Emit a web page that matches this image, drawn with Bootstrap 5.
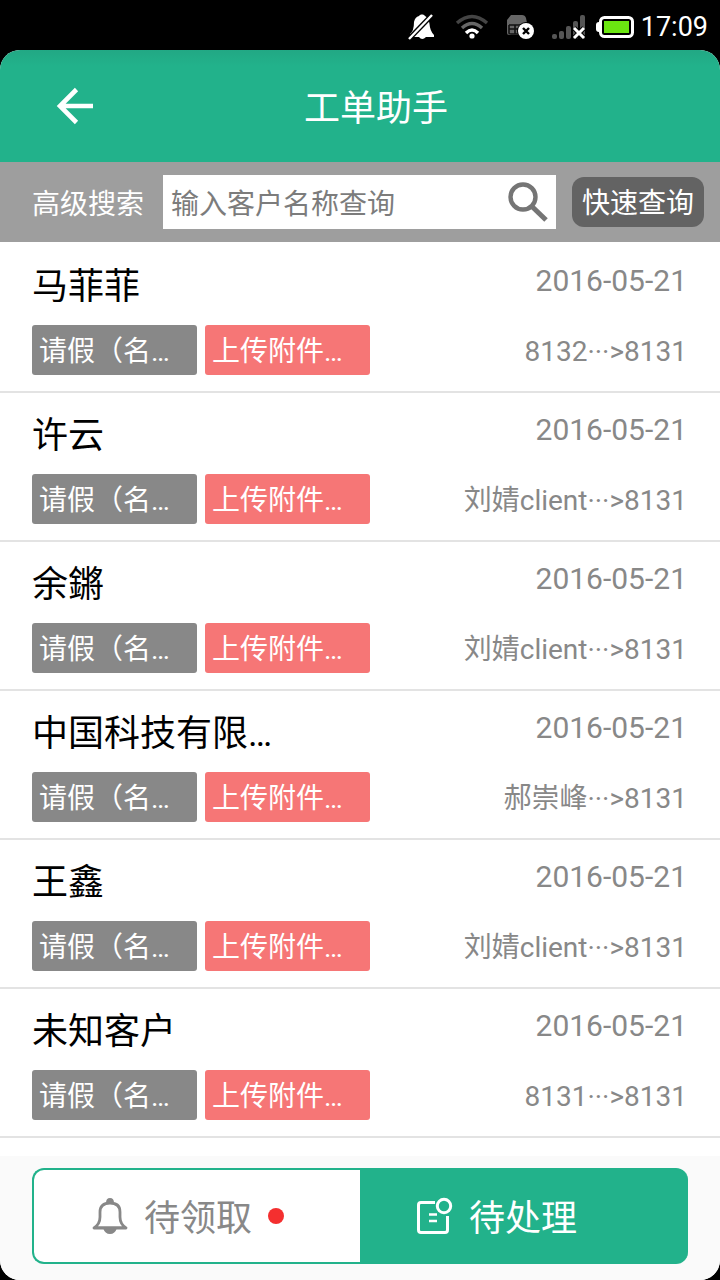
<!DOCTYPE html>
<html lang="zh-CN">
<head>
<meta charset="utf-8">
<meta name="viewport" content="width=device-width, initial-scale=1">
<title>工单助手</title>
<link href="https://cdn.jsdelivr.net/npm/bootstrap@5.3.0/dist/css/bootstrap.min.css" rel="stylesheet">
<style>
  :root { --brand: #22b28b; --muted: #888; }
  body { background: #000; color: #000; font-family: Roboto, "Noto Sans CJK SC", sans-serif; font-size: 28px; line-height: 40px; }
  svg { display: block; flex: none; }
  .status-bar { height: 50px; padding: 4px 12px 0 0; font-size: 27px; gap: 6px; }
  .status-icons { gap: 16px; }
  .app { background: #fff; border-radius: 20px; }
  .app-header { height: 112px; background: linear-gradient(#22a884, var(--brand) 16px); }
  .app-header h1 { font-size: 36px; line-height: 52px; font-weight: 400; padding-top: 6px; }
  .side { width: 150px; }
  .side-end { width: 118px; }
  .back { padding: 16px 56px; }
  .search-bar { background: #9e9e9e; height: 80px; padding: 0 16px 0 32px; gap: 16px; }
  .advanced { margin-right: 3px; padding-top: 6px; }
  .search-box { height: 54px; }
  .search-box input { min-width: 0; font-size: 28px; line-height: 40px; padding: 6px 0 0 8px; color: #777; }
  .search-box input::placeholder { color: #7c7c7c; opacity: 1; }
  .quick { background: #636363; border-radius: 12px; height: 50px; flex: 0 0 132px; padding: 4px 0 0; }
  .orders { padding-top: 2px; }
  .order { padding: 17px 33px 16px 32px; border-bottom: 2px solid #e3e3e3; }
  .order h2 { font-size: 36px; line-height: 52px; font-weight: 400; margin-bottom: 12px; }
  .tags { gap: 8px; }
  .tag { width: 165px; height: 50px; line-height: 54px; padding-left: 7px; border-radius: 3px; color: #fff; background: #888; }
  .tag-red { background: #f67676; }
  .meta { color: var(--muted); }
  .meta time { font-size: 30px; }
  .route { padding-bottom: 3px; }
  .tab-bar { background: #fafafa; padding: 12px 32px 16px; }
  .tab-item { height: 96px; font-size: 36px; line-height: 52px; color: var(--muted); gap: 16px; padding: 0 0 0 58px; background: #fff; border: 2px solid var(--brand); border-right: 0; border-radius: 12px 0 0 12px; }
  .tab-item.active { background: var(--brand); color: #fff; padding-left: 53px; border-color: var(--brand); border-radius: 0 12px 12px 0; }
  .tab-label { padding-top: 6px; }
  .dot { width: 16px; height: 16px; background: #f42f2f; }
</style>
</head>
<body>
<div class="d-flex flex-column min-vh-100">
  <div class="status-bar d-flex align-items-center justify-content-end text-white">
    <div class="status-icons d-flex">
      <svg width="31" height="26" viewBox="0 0 31 26"><path d="M2 20Q6 17 6 8Q7 3 11 2Q12 0 14 0.500Q16 0 17 2Q21 4 21.500 10Q22 17 26 21V23H18Q14 27 11 23H2Z" fill="#fff"/><path d="M-1 27L26-1" stroke="#000" stroke-width="5"/><path d="M1 25L24 1" stroke="#fff" stroke-width="2.400"/></svg>
      <svg width="35" height="26" viewBox="0 0 35 26" fill="none" stroke-width="3.4"><path d="M2 9Q17-4 32 9" stroke="#444"/><path d="M7 14Q17 5 27 14" stroke="#666"/><path d="M11 19Q17 13 23 19" stroke="#fff"/><circle cx="17" cy="22" r="2.6" fill="#fff"/></svg>
      <svg width="30" height="26" viewBox="0 0 30 26"><path d="M5 1H16Q19 1 20 4L21 9V21H3Q1 21 1 19V6Z" fill="#666"/><path d="M3 11H22M3 11V19Q3 20 5 20H14M3 15H12M9 11V20" fill="none" stroke="#111" stroke-width="1.6"/><circle cx="20" cy="17" r="9" fill="#000"/><circle cx="20" cy="17" r="8" fill="#fff"/><path d="M17 14L23 20M23 14L17 20" stroke="#000" stroke-width="2.4"/></svg>
      <svg width="34" height="26" viewBox="0 0 34 26"><g fill="#555"><rect y="20" width="5" height="5" rx="2"/><rect x="7" y="17" width="5" height="8" rx="2"/><rect x="14" y="12" width="5" height="13" rx="2"/><rect x="21" y="7" width="5" height="18" rx="2"/><rect x="28" y="1" width="5" height="24" rx="2"/></g><path d="M22 14L32 24M32 14L22 24" stroke="#000" stroke-width="5"/><path d="M22 14L32 24M32 14L22 24" stroke="#fff" stroke-width="3"/></svg>
    </div>
    <svg class="ms-1" width="39" height="22" viewBox="0 0 39 22"><rect y="6" width="6" height="10" rx="3" fill="#fff"/><rect x="4.500" y="1.500" width="32" height="19" rx="4" fill="#000" stroke="#fff" stroke-width="3"/><rect x="8" y="5" width="25" height="12" fill="#6be611"/></svg>
    <span>17:09</span>
  </div>

  <div class="app d-flex flex-column flex-grow-1 overflow-hidden">
    <header class="app-header d-flex align-items-center text-white">
      <div class="side"><button type="button" class="back btn border-0" aria-label="返回"><svg width="38" height="38" viewBox="0 0 38 38" fill="none" stroke="#fff" stroke-width="4.600"><path d="M20.500 2.500L4 19L20.500 35.500M4 19H37"/></svg></button></div>
      <h1 class="flex-grow-1 text-center mb-0">工单助手</h1>
      <div class="side-end"></div>
    </header>

    <form class="search-bar d-flex align-items-center">
      <a href="#" class="advanced text-white text-decoration-none text-nowrap">高级搜索</a>
      <div class="search-box d-flex align-items-center flex-grow-1 bg-white">
        <input type="text" class="form-control border-0 rounded-0 bg-transparent shadow-none" placeholder="输入客户名称查询" aria-label="输入客户名称查询">
        <button type="button" class="btn border-0 p-0 me-2" aria-label="搜索"><svg width="40" height="40" viewBox="0 0 40 40" fill="none" stroke="#757575"><circle cx="15" cy="15" r="12.500" stroke-width="4.400"/><path d="M24.500 25L38 38" stroke-width="5"/></svg></button>
      </div>
      <button type="button" class="quick border-0 text-white text-nowrap">快速查询</button>
    </form>

    <ul class="orders list-unstyled m-0">
      <li class="order d-flex justify-content-between">
        <div><h2>马菲菲</h2><div class="tags d-flex"><span class="tag">请假（名…</span><span class="tag tag-red">上传附件…</span></div></div>
        <div class="meta d-flex flex-column justify-content-between text-end"><time datetime="2016-05-21">2016-05-21</time><span class="route">8132···&gt;8131</span></div>
      </li>
      <li class="order d-flex justify-content-between">
        <div><h2>许云</h2><div class="tags d-flex"><span class="tag">请假（名…</span><span class="tag tag-red">上传附件…</span></div></div>
        <div class="meta d-flex flex-column justify-content-between text-end"><time datetime="2016-05-21">2016-05-21</time><span class="route">刘婧client···&gt;8131</span></div>
      </li>
      <li class="order d-flex justify-content-between">
        <div><h2>余鏘</h2><div class="tags d-flex"><span class="tag">请假（名…</span><span class="tag tag-red">上传附件…</span></div></div>
        <div class="meta d-flex flex-column justify-content-between text-end"><time datetime="2016-05-21">2016-05-21</time><span class="route">刘婧client···&gt;8131</span></div>
      </li>
      <li class="order d-flex justify-content-between">
        <div><h2>中国科技有限…</h2><div class="tags d-flex"><span class="tag">请假（名…</span><span class="tag tag-red">上传附件…</span></div></div>
        <div class="meta d-flex flex-column justify-content-between text-end"><time datetime="2016-05-21">2016-05-21</time><span class="route">郝崇峰···&gt;8131</span></div>
      </li>
      <li class="order d-flex justify-content-between">
        <div><h2>王鑫</h2><div class="tags d-flex"><span class="tag">请假（名…</span><span class="tag tag-red">上传附件…</span></div></div>
        <div class="meta d-flex flex-column justify-content-between text-end"><time datetime="2016-05-21">2016-05-21</time><span class="route">刘婧client···&gt;8131</span></div>
      </li>
      <li class="order d-flex justify-content-between">
        <div><h2>未知客户</h2><div class="tags d-flex"><span class="tag">请假（名…</span><span class="tag tag-red">上传附件…</span></div></div>
        <div class="meta d-flex flex-column justify-content-between text-end"><time datetime="2016-05-21">2016-05-21</time><span class="route">8131···&gt;8131</span></div>
      </li>
    </ul>

    <nav class="tab-bar mt-auto d-flex">
      <button type="button" class="tab-item btn w-50 d-flex align-items-center">
        <svg width="36" height="38" viewBox="0 0 36 38"><path d="M2 31Q8 27 8 20V15Q8 6 18 6Q28 6 28 15V20Q28 27 34 31Z" fill="none" stroke="#888" stroke-width="2.800" stroke-linejoin="round"/><path d="M14 6Q14 1 18 1Q22 1 22 6Z M11 31H25Q23 37 18 37Q13 37 11 31Z M2 29.500H34V32H2Z" fill="#888"/></svg>
        <span class="tab-label">待领取</span><span class="dot rounded-circle"></span>
      </button>
      <button type="button" class="tab-item active btn w-50 d-flex align-items-center" aria-current="page">
        <svg width="38" height="38" viewBox="0 0 38 38" fill="none" stroke="#fff" stroke-width="3"><path d="M20 5.500H6Q3.500 5.500 3.500 8V33Q3.500 35.500 6 35.500H30Q32.500 35.500 32.500 33V19"/><circle cx="29" cy="9" r="6.700"/><path d="M14 17.500H22M14 24H22" stroke-width="2.600"/></svg>
        <span class="tab-label">待处理</span>
      </button>
    </nav>
  </div>
</div>
<script src="https://cdn.jsdelivr.net/npm/bootstrap@5.3.0/dist/js/bootstrap.bundle.min.js"></script>
</body>
</html>
